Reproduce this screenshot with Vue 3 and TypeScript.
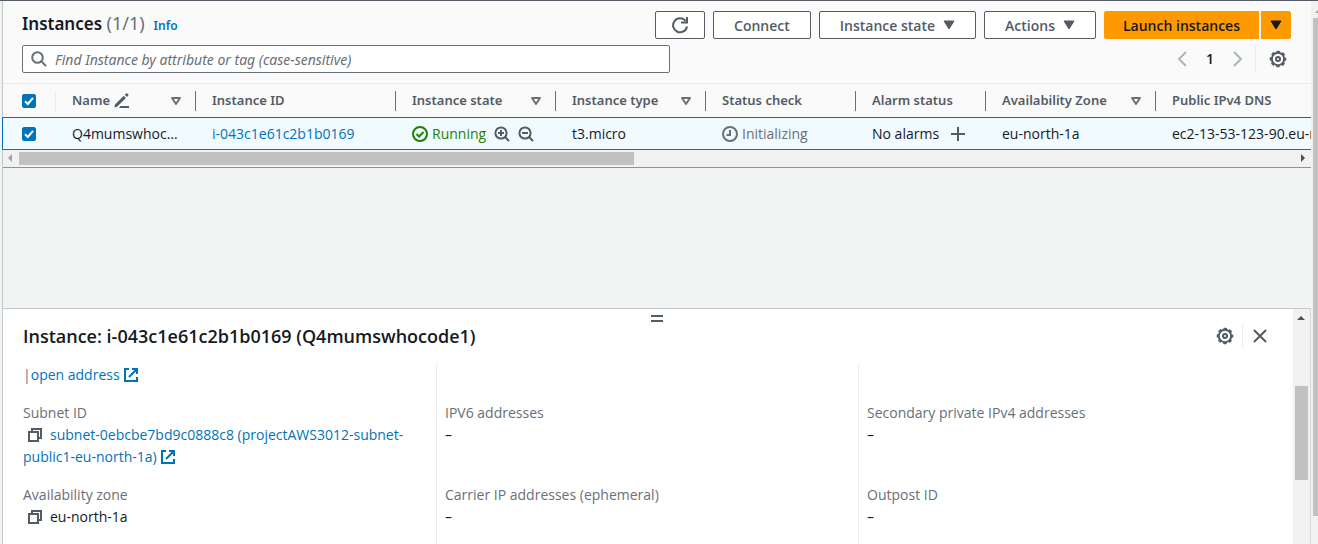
<script setup lang="ts">
import { ref } from 'vue'

interface Column {
  key: string
  label: string
  sortable: boolean
  editable?: boolean
}

interface Field {
  label: string
  value: string
  copy?: boolean
  link?: boolean
}

const columns: Column[] = [
  { key: 'name', label: 'Name', sortable: true, editable: true },
  { key: 'id', label: 'Instance ID', sortable: false },
  { key: 'state', label: 'Instance state', sortable: true },
  { key: 'type', label: 'Instance type', sortable: true },
  { key: 'check', label: 'Status check', sortable: false },
  { key: 'alarm', label: 'Alarm status', sortable: false },
  { key: 'zone', label: 'Availability Zone', sortable: true },
  { key: 'dns', label: 'Public IPv4 DNS', sortable: false },
]

const fields: Field[] = [
  { label: 'Subnet ID', value: 'subnet-0ebcbe7bd9c0888c8 (projectAWS3012-subnet-public1-eu-north-1a)', copy: true, link: true },
  { label: 'IPV6 addresses', value: '–' },
  { label: 'Secondary private IPv4 addresses', value: '–' },
  { label: 'Availability zone', value: 'eu-north-1a', copy: true },
  { label: 'Carrier IP addresses (ephemeral)', value: '–' },
  { label: 'Outpost ID', value: '–' },
]

const allSelected = ref(true)
const rowSelected = ref(true)
const query = ref('')
</script>

<template>
  <div class="page">
    <main class="content">
      <section class="instances">
        <header class="title-row">
          <h1>Instances <span class="count">(1/1)</span></h1>
          <a class="info" href="#">Info</a>
          <div class="actions">
            <button class="btn icon-btn" type="button" aria-label="Refresh">
              <svg width="18" height="18" viewBox="0 0 18 18" fill="none" stroke="currentColor" stroke-width="2">
                <path d="M16 10.5A7 7 0 1 1 14.6 5" />
                <path d="M16 1v5.6h-6" />
              </svg>
            </button>
            <button class="btn" type="button">Connect</button>
            <button class="btn" type="button">
              Instance state
              <svg class="caret" width="12" height="10" viewBox="0 0 12 10"><path d="M1 1h10L6 9z" fill="currentColor" stroke="currentColor" stroke-linejoin="round" /></svg>
            </button>
            <button class="btn" type="button">
              Actions
              <svg class="caret" width="12" height="10" viewBox="0 0 12 10"><path d="M1 1h10L6 9z" fill="currentColor" stroke="currentColor" stroke-linejoin="round" /></svg>
            </button>
            <div class="split">
              <button class="btn primary main" type="button">Launch instances</button>
              <button class="btn primary more" type="button" aria-label="More launch options">
                <svg width="12" height="10" viewBox="0 0 12 10"><path d="M1 1h10L6 9z" fill="currentColor" stroke="currentColor" stroke-linejoin="round" /></svg>
              </button>
            </div>
          </div>
        </header>

        <div class="filter-row">
          <label class="search">
            <svg width="16" height="16" viewBox="0 0 16 16" fill="none" stroke="#687078" stroke-width="2">
              <circle cx="6.5" cy="6.5" r="5.3" />
              <path d="M10.4 10.4 15 15" />
            </svg>
            <input v-model="query" type="text" aria-label="Find instances" placeholder="Find Instance by attribute or tag (case-sensitive)" />
          </label>
          <nav class="pager" aria-label="Pagination">
            <button class="plain faded" type="button" aria-label="Previous page">
              <svg width="10" height="16" viewBox="0 0 10 16" fill="none" stroke="currentColor" stroke-width="2"><path d="M9 1 2 8l7 7" /></svg>
            </button>
            <button class="plain current" type="button">1</button>
            <button class="plain faded" type="button" aria-label="Next page">
              <svg width="10" height="16" viewBox="0 0 10 16" fill="none" stroke="currentColor" stroke-width="2"><path d="m1 1 7 7-7 7" /></svg>
            </button>
          </nav>
          <button class="plain prefs" type="button" aria-label="Preferences">
            <svg width="18" height="18" viewBox="0 0 18 18" fill="none" stroke="currentColor">
              <circle cx="9" cy="9" r="6.2" stroke-width="2" />
              <circle cx="9" cy="9" r="7.5" stroke-width="1.6" stroke-dasharray="3.4 2.49" stroke-dashoffset="1.7" />
              <circle cx="9" cy="9" r="2" stroke-width="2" />
            </svg>
          </button>
        </div>

        <div class="table-wrap">
          <table>
            <colgroup>
              <col class="c-select" />
              <col v-for="c in columns" :key="c.key" :class="'c-' + c.key" />
            </colgroup>
            <thead>
              <tr>
                <th class="select faint"><input v-model="allSelected" type="checkbox" aria-label="Select all" /></th>
                <th v-for="c in columns" :key="c.key" scope="col">
                  <div class="th">
                    <span class="th-text">{{ c.label }}</span>
                    <svg v-if="c.editable" class="pencil" width="16" height="16" viewBox="0 0 16 16" fill="currentColor">
                      <path d="M1 11.6 9.8 2.8l2.1 2.1L3.1 13.7.4 14.4zM10.8 1.8 12.2.5q.6-.5 1.2 0l.9.9q.5.6 0 1.2L12.9 3.9zM6.5 13H15v2H5z" />
                    </svg>
                    <svg v-if="c.sortable" class="sort" width="12" height="10" viewBox="0 0 12 10" fill="none" stroke="#687078" stroke-width="2" stroke-linejoin="round"><path d="M2 2h8L6 8z" /></svg>
                  </div>
                </th>
              </tr>
            </thead>
            <tbody>
              <tr>
                <td class="select"><input v-model="rowSelected" type="checkbox" aria-label="Select instance" /></td>
                <td><div class="cut">Q4mumswhocode1</div></td>
                <td><a href="#">i-043c1e61c2b1b0169</a></td>
                <td>
                  <div class="cell">
                    <span class="status ok">
                      <svg width="16" height="16" viewBox="0 0 16 16" fill="none" stroke="currentColor" stroke-width="2"><circle cx="8" cy="8" r="7" /><path d="m4.5 8 2.6 2.6 4.4-4.6" /></svg>
                      Running
                    </span>
                    <button class="plain zoom" type="button" aria-label="Filter in">
                      <svg width="16" height="16" viewBox="0 0 16 16" fill="none" stroke="currentColor" stroke-width="2"><circle cx="7" cy="7" r="5.6" /><path d="m11 11 4 4M4 7h6M7 4v6" /></svg>
                    </button>
                    <button class="plain zoom" type="button" aria-label="Filter out">
                      <svg width="16" height="16" viewBox="0 0 16 16" fill="none" stroke="currentColor" stroke-width="2"><circle cx="7" cy="7" r="5.6" /><path d="m11 11 4 4M4 7h6" /></svg>
                    </button>
                  </div>
                </td>
                <td>t3.micro</td>
                <td>
                  <span class="status pending">
                    <svg width="16" height="16" viewBox="0 0 16 16" fill="none" stroke="currentColor" stroke-width="2"><circle cx="8" cy="8" r="7" /><path d="M8 4v5H4.5" /></svg>
                    Initializing
                  </span>
                </td>
                <td>
                  <div class="cell">
                    No alarms
                    <button class="plain add" type="button" aria-label="Add alarm">
                      <svg width="14" height="14" viewBox="0 0 14 14" stroke="currentColor" stroke-width="2"><path d="M7 0v14M0 7h14" /></svg>
                    </button>
                  </div>
                </td>
                <td>eu-north-1a</td>
                <td>ec2-13-53-123-90.eu-north-1</td>
              </tr>
            </tbody>
          </table>
        </div>
        <div class="hbar">
          <svg width="16" height="17" viewBox="0 0 16 17"><path d="M9 4v8L5 8z" fill="#a3a3a3" /></svg>
          <div class="htrack"><div class="hthumb"></div></div>
          <svg width="16" height="17" viewBox="0 0 16 17"><path d="M6 4v8l4-4z" fill="#505050" /></svg>
        </div>
      </section>

      <div class="gap"></div>

      <section class="panel">
        <div class="panel-main">
          <button class="plain grip" type="button" aria-label="Resize panel"><span></span><span></span></button>
          <header class="panel-head">
            <h2>Instance: i-043c1e61c2b1b0169 (Q4mumswhocode1)</h2>
            <button class="plain" type="button" aria-label="Panel preferences">
              <svg width="18" height="18" viewBox="0 0 18 18" fill="none" stroke="currentColor">
                <circle cx="9" cy="9" r="6.2" stroke-width="2" />
                <circle cx="9" cy="9" r="7.5" stroke-width="1.6" stroke-dasharray="3.4 2.49" stroke-dashoffset="1.7" />
                <circle cx="9" cy="9" r="2" stroke-width="2" />
              </svg>
            </button>
            <button class="plain close" type="button" aria-label="Close panel">
              <svg width="14" height="14" viewBox="0 0 14 14" stroke="currentColor" stroke-width="2"><path d="m1 1 12 12M13 1 1 13" /></svg>
            </button>
          </header>
          <div class="details">
            <div class="field lead">
              <span class="bar">|</span><a href="#">open address</a>
              <svg class="ext" width="14" height="14" viewBox="0 0 14 14" fill="none" stroke="currentColor" stroke-width="2"><path d="M5 1H1v12h12V9M8 1h5v5M13 1 5 9" /></svg>
            </div>
            <div class="field lead"></div>
            <div class="field lead"></div>
            <dl v-for="f in fields" :key="f.label" class="field">
              <dt>{{ f.label }}</dt>
              <dd>
                <button v-if="f.copy" class="plain copy" type="button" aria-label="Copy">
                  <svg width="14" height="14" viewBox="0 0 14 14" fill="none" stroke="currentColor" stroke-width="2"><path d="M1 4h9v9H1zM4 4V1h9v9h-3" /></svg>
                </button>
                <template v-if="f.link">
                  <a href="#">{{ f.value }}</a>
                  <svg class="ext" width="14" height="14" viewBox="0 0 14 14" fill="none" stroke="currentColor" stroke-width="2"><path d="M5 1H1v12h12V9M8 1h5v5M13 1 5 9" /></svg>
                </template>
                <template v-else>{{ f.value }}</template>
              </dd>
            </dl>
          </div>
        </div>
        <div class="vbar">
          <svg width="17" height="17" viewBox="0 0 17 17"><path d="M4 11h8L8 7z" fill="#505050" /></svg>
          <div class="vthumb"></div>
        </div>
      </section>
    </main>
    <div class="page-bar">
      <svg width="6" height="17" viewBox="0 0 6 17"><path d="M2 12h8L6 8z" fill="#a3a3a3" /></svg>
      <div class="page-thumb"></div>
    </div>
  </div>
</template>

<style>
body {
  background: #f2f3f3;
}
</style>

<style scoped>
* {
  box-sizing: border-box;
}
.page {
  display: flex;
  height: 100vh;
  overflow: hidden;
  border-top: 1px solid #545b64;
  background: #f2f3f3;
  font-family: 'Open Sans', 'Noto Sans', sans-serif;
  font-size: 14px;
  line-height: 22px;
  color: #16191f;
}
svg {
  display: block;
  flex: none;
}
a {
  color: #0073bb;
  text-decoration: none;
}
.content {
  flex: 1;
  min-width: 0;
  display: flex;
  flex-direction: column;
  margin-left: 2px;
  border-left: 1px solid #c3c9c9;
}
.instances {
  background: #fafafa;
  border-bottom: 1px solid #879596;
}
.title-row {
  display: flex;
  align-items: center;
  padding: 10px 20px 0 19px;
}
h1,
h2 {
  margin: 0;
  font-family: 'Noto Sans', 'Open Sans', sans-serif;
  font-weight: 600;
}
h1 {
  padding-bottom: 4px;
  font-size: 17px;
}
.count {
  color: #687078;
  font-size: 18px;
  font-weight: 400;
}
.info {
  margin-left: 9px;
  font: 600 12px 'Noto Sans', 'Open Sans', sans-serif;
}
.actions {
  display: flex;
  gap: 8px;
  margin-left: auto;
}
.btn {
  display: flex;
  align-items: center;
  height: 28px;
  padding: 0 20px;
  border: 1px solid #545b64;
  border-radius: 2px;
  background: #fff;
  color: #545b64;
  font: 600 14px 'Open Sans', 'Noto Sans', sans-serif;
}
.icon-btn {
  padding: 0 15px;
}
.caret {
  margin-left: 8px;
}
.split {
  display: flex;
  gap: 2px;
}
.primary {
  border-color: #ff9900;
  background: #ff9900;
  color: #16191f;
}
.main {
  padding: 0 18px;
  border-radius: 2px 0 0 2px;
}
.more {
  padding: 0 8px;
  border-radius: 0 2px 2px 0;
}
.filter-row {
  display: flex;
  align-items: center;
  padding: 6px 20px 10px 19px;
  border-bottom: 1px solid #eaeded;
}
.search {
  display: flex;
  align-items: center;
  gap: 8px;
  width: 52%;
  max-width: 648px;
  height: 28px;
  padding: 0 8px;
  border: 1px solid #687078;
  border-radius: 2px;
  background: #fff;
}
.search input {
  flex: 1;
  min-width: 0;
  padding: 0;
  border: 0;
  outline: 0;
  background: transparent;
  font: 14px 'Noto Sans', 'Open Sans', sans-serif;
}
.search input::placeholder {
  color: #687078;
  font-style: italic;
  opacity: 1;
}
.plain {
  display: flex;
  padding: 0;
  border: 0;
  background: none;
  color: #545b64;
  font: inherit;
}
.pager {
  display: flex;
  align-items: center;
  gap: 19px;
  margin-left: auto;
}
.faded {
  color: #aab7b8;
}
.current {
  color: #16191f;
  font-weight: 600;
}
.prefs {
  align-items: center;
  height: 28px;
  margin-left: 12px;
  padding: 0 4px 0 13px;
  border-left: 1px solid #eaeded;
}
.table-wrap {
  margin-left: -1px;
  overflow: hidden;
}
table {
  width: 1354px;
  table-layout: fixed;
  border-collapse: separate;
  border-spacing: 0;
}
.c-select {
  width: 54px;
}
.c-name {
  width: 140px;
}
.c-id,
.c-dns {
  width: 200px;
}
.c-state {
  width: 160px;
}
.c-type,
.c-check {
  width: 150px;
}
.c-alarm {
  width: 130px;
}
.c-zone {
  width: 170px;
}
th {
  height: 33px;
  padding: 0;
  text-align: left;
  font: 600 13px 'Noto Sans', 'Open Sans', sans-serif;
  color: #545b64;
}
.th {
  display: flex;
  align-items: center;
  height: 20px;
  padding: 0 13px 0 16px;
  border-right: 1px solid #687078;
  line-height: 18px;
  white-space: nowrap;
}
.th-text {
  padding-bottom: 2px;
}
.pencil {
  margin-left: 4px;
}
.sort {
  margin-left: auto;
}
.select {
  padding: 0 0 0 20px;
}
.faint {
  background: linear-gradient(#eaeded, #eaeded) right center / 1px 20px no-repeat;
}
input[type='checkbox'] {
  appearance: none;
  display: block;
  width: 14px;
  height: 14px;
  margin: 0;
  border: 1px solid #687078;
  border-radius: 2px;
  background: #fff;
}
input[type='checkbox']:checked {
  border-color: #0073bb;
  background: #0073bb
    url("data:image/svg+xml,%3Csvg xmlns='http://www.w3.org/2000/svg' viewBox='0 0 12 12'%3E%3Cpath d='M2 6.3 4.8 9 10 2.8' fill='none' stroke='white' stroke-width='2'/%3E%3C/svg%3E")
    center / 12px 12px no-repeat;
}
td {
  height: 33px;
  padding: 0 16px;
  border-top: 1px solid #0073bb;
  border-bottom: 1px solid #0073bb;
  background: #f1faff;
  white-space: nowrap;
}
td.select {
  padding: 0 0 0 19px;
  border-left: 1px solid #0073bb;
}
.cut {
  overflow: hidden;
  text-overflow: ellipsis;
}
.cell {
  display: flex;
  align-items: center;
}
.status {
  display: flex;
  align-items: center;
  gap: 4px;
}
.ok {
  color: #1d8102;
}
.pending {
  color: #687078;
}
.zoom {
  margin-left: 8px;
}
.add {
  margin-left: 12px;
}
.hbar {
  display: flex;
  height: 17px;
  background: #f1f1f1;
}
.htrack {
  flex: 1;
  padding: 2px 0;
}
.hthumb {
  width: 48.2%;
  height: 13px;
  background: #c1c1c1;
}
.gap {
  flex: 1;
}
.panel {
  display: flex;
  height: 236px;
  overflow: hidden;
  border-top: 1px solid #c3c9c9;
  border-right: 1px solid #d5dbdb;
  background: #fff;
}
.panel-main {
  flex: 1;
  min-width: 0;
}
.grip {
  flex-direction: column;
  gap: 3px;
  margin: 6px auto 0;
  padding-left: 17px;
}
.grip span {
  width: 12px;
  height: 2px;
  background: #545b64;
}
.panel-head {
  display: flex;
  align-items: center;
  height: 28px;
  padding: 0 26px 0 20px;
}
h2 {
  flex: 1;
  font-family: 'Open Sans', 'Noto Sans', sans-serif;
  font-size: 18px;
}
.close {
  align-items: center;
  height: 24px;
  margin-left: 8px;
  padding-left: 10px;
  border-left: 1px solid #eaeded;
}
.details {
  display: grid;
  grid-template-columns: repeat(3, 1fr);
  margin: 14px 13px 0 11px;
}
.field {
  margin: 0;
  padding: 0 20px 16px 8px;
  border-left: 1px solid #eaeded;
}
.field:nth-child(3n + 1) {
  border-left-color: transparent;
}
.bar {
  color: #687078;
}
.ext,
.copy,
.copy svg {
  display: inline-block;
  vertical-align: -2px;
}
.ext {
  margin-left: 4px;
  color: #0073bb;
}
.copy {
  margin: 0 8px 0 5px;
  vertical-align: baseline;
}
dt {
  color: #687078;
}
dd {
  margin: 0;
}
.vbar {
  width: 17px;
  background: #f1f1f1;
}
.vthumb {
  width: 13px;
  height: 94px;
  margin: 60px 2px 0;
  background: #c1c1c1;
}
.page-bar {
  flex: none;
  width: 7px;
  overflow: hidden;
  padding-left: 2px;
  background: #f1f1f1;
}
.page-thumb {
  height: 498px;
  background: #c1c1c1;
}
</style>
